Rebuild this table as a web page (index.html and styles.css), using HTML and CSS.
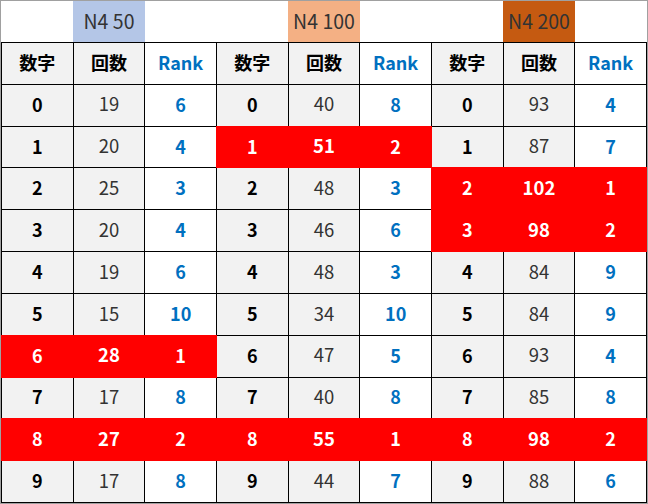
FILE: index.html
```html
<!DOCTYPE html>
<html lang="ja">
<head>
<meta charset="utf-8">
<link rel="stylesheet" href="styles.css">
<title>N4</title>
</head>
<body>
<div class="frame">
  <div class="top">
    <div></div><div class="band blue">N4 50</div><div></div>
    <div></div><div class="band orange">N4 100</div><div></div>
    <div></div><div class="band brown">N4 200</div><div></div>
  </div>
  <div class="table">
    <div class="c n">数字</div><div class="c k hd">回数</div><div class="c r">Rank</div>
    <div class="c n">数字</div><div class="c k hd">回数</div><div class="c r">Rank</div>
    <div class="c n">数字</div><div class="c k hd">回数</div><div class="c r">Rank</div>

    <div class="c n">0</div><div class="c k">19</div><div class="c r">6</div>
    <div class="c n">0</div><div class="c k">40</div><div class="c r">8</div>
    <div class="c n">0</div><div class="c k">93</div><div class="c r">4</div>

    <div class="c n">1</div><div class="c k">20</div><div class="c r">4</div>
    <div class="c n hot">1</div><div class="c k hot">51</div><div class="c r hot">2</div>
    <div class="c n">1</div><div class="c k">87</div><div class="c r">7</div>

    <div class="c n">2</div><div class="c k">25</div><div class="c r">3</div>
    <div class="c n">2</div><div class="c k">48</div><div class="c r">3</div>
    <div class="c n hot">2</div><div class="c k hot">102</div><div class="c r hot">1</div>

    <div class="c n">3</div><div class="c k">20</div><div class="c r">4</div>
    <div class="c n">3</div><div class="c k">46</div><div class="c r">6</div>
    <div class="c n hot">3</div><div class="c k hot">98</div><div class="c r hot">2</div>

    <div class="c n">4</div><div class="c k">19</div><div class="c r">6</div>
    <div class="c n">4</div><div class="c k">48</div><div class="c r">3</div>
    <div class="c n">4</div><div class="c k">84</div><div class="c r">9</div>

    <div class="c n">5</div><div class="c k">15</div><div class="c r">10</div>
    <div class="c n">5</div><div class="c k">34</div><div class="c r">10</div>
    <div class="c n">5</div><div class="c k">84</div><div class="c r">9</div>

    <div class="c n hot">6</div><div class="c k hot">28</div><div class="c r hot">1</div>
    <div class="c n">6</div><div class="c k">47</div><div class="c r">5</div>
    <div class="c n">6</div><div class="c k">93</div><div class="c r">4</div>

    <div class="c n">7</div><div class="c k">17</div><div class="c r">8</div>
    <div class="c n">7</div><div class="c k">40</div><div class="c r">8</div>
    <div class="c n">7</div><div class="c k">85</div><div class="c r">8</div>

    <div class="c n hot">8</div><div class="c k hot">27</div><div class="c r hot">2</div>
    <div class="c n hot">8</div><div class="c k hot">55</div><div class="c r hot">1</div>
    <div class="c n hot">8</div><div class="c k hot">98</div><div class="c r hot">2</div>

    <div class="c n">9</div><div class="c k">17</div><div class="c r">8</div>
    <div class="c n">9</div><div class="c k">44</div><div class="c r">7</div>
    <div class="c n">9</div><div class="c k">88</div><div class="c r">6</div>
  </div>
</div>
</body>
</html>
```

FILE: styles.css
```css
* { box-sizing: border-box; }
html, body { margin: 0; padding: 0; background: #fff; }
body {
  font-family: "Noto Sans CJK JP", "Noto Sans", sans-serif;
  width: 648px;
  height: 504px;
  overflow: hidden;
}
.frame {
  width: 648px;
  height: 504px;
  border: 1px solid #a0a0a0;
  display: flex;
  flex-direction: column;
  background: #fff;
}
.top {
  height: 41px;
  display: grid;
  grid-template-columns: repeat(9, 1fr);
  column-gap: 1px;
  padding: 0 1px;
}
.band {
  margin: 0 -1px;
  display: flex;
  align-items: center;
  justify-content: center;
  padding-bottom: 2px;
  font-size: 19.5px;
  font-weight: 400;
  line-height: 1;
  color: #333;
}
.blue { background: #b4c6e7; }
.orange { background: #f4b084; }
.brown { background: #c55a11; }
.table {
  flex: 1;
  display: grid;
  grid-template-columns: repeat(9, 1fr);
  grid-template-rows: repeat(11, 1fr);
  gap: 1px;
  padding: 1px;
  background: #000;
}
.c {
  display: flex;
  align-items: center;
  justify-content: center;
  padding-bottom: 3px;
  font-size: 18px;
  line-height: 1;
  background: #fff;
}
.n { background: #f2f2f2; font-weight: 700; color: #000; }
.k { background: #f2f2f2; font-weight: 400; font-size: 18.5px; color: #333; }
.k.hd { font-weight: 700; font-size: 18px; color: #000; }
.r { background: #fff; font-weight: 700; color: #0070c0; }
.c.hot {
  background: #ff0000;
  color: #fff;
  font-weight: 700;
  margin: -1px;
}
```
